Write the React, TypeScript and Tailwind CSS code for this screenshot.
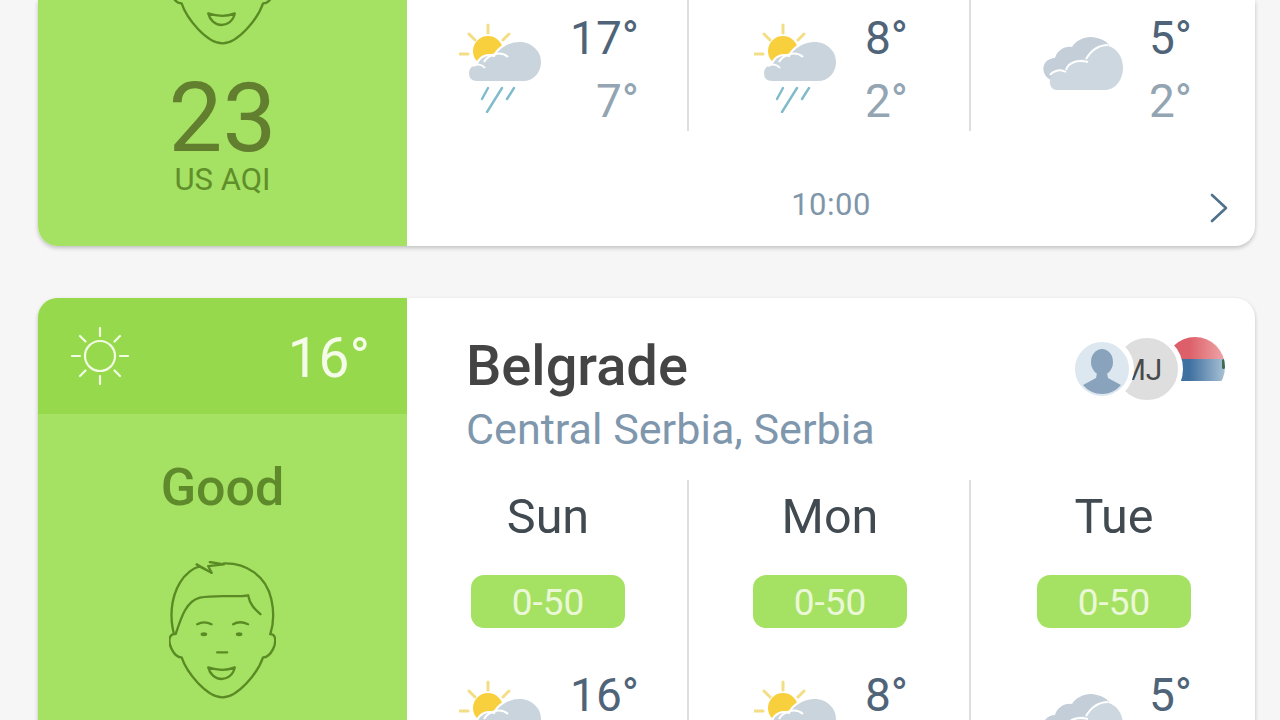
const days = [
  { name: 'Sun', high: '16°', top: '17°', low: '7°', icon: 'rain' },
  { name: 'Mon', high: '8°', top: '8°', low: '2°', icon: 'rain' },
  { name: 'Tue', high: '5°', top: '5°', low: '2°', icon: 'cloud' },
];

function RainIcon() {
  return (
    <svg width="84" height="90" viewBox="0 0 84 90" fill="none" className="ml-[4px] shrink-0">
      <g stroke="#f3dd85" strokeWidth="3" strokeLinecap="round">
        <path d="M29 2V10M1 31H9M10 11L16 17M50 11L44 17" />
      </g>
      <circle cx="29" cy="28" r="15" fill="#f8cf3d" />
      <path
        d="M18 59C11 59 9 54 9 50C9 45 13 41 18 41C20 34 28 30 35 33C39 24 51 17 63 18C74 19 83 28 83 39C83 50 75 59 64 59Z"
        fill="#c9d4dd"
        stroke="#ffffff"
        strokeWidth="2"
      />
      <path d="M25 39C29 32 41 27 49 34M14 43C18 41 23 41 26 45" stroke="#ffffff" strokeWidth="2" fill="none" />
      <g stroke="#7fbccb" strokeWidth="2.4" strokeLinecap="round">
        <path d="M29 65L23 76M43 65L28 89M55 65L48 76" />
      </g>
    </svg>
  );
}

function CloudIcon() {
  return (
    <svg width="80" height="53" viewBox="0 0 80 53" fill="none" className="mb-[10px] ml-[9px] -mr-[1px] shrink-0">
      <path
        d="M8 43C2 40 -1 34 1 28C3 23 8 21 12 21C14 14 21 9 29 10C34 2 45 -2 54 1C59 2 63 4 66 8L30 40Z"
        fill="#c3ced8"
      />
      <path
        d="M14 53C9 53 6 48 7 43C8 37 14 33 22 34C24 27 34 22 45 21C50 12 58 8 65 9C74 11 80 20 80 31C80 43 72 53 62 53Z"
        fill="#ccd7e0"
      />
      <path d="M7 38C11 33 18 32 23 35M23 33C25 26 34 22 45 25M43 22C49 12 57 8 65 8" stroke="#ffffff" strokeWidth="2" fill="none" />
    </svg>
  );
}

function Face() {
  return (
    <svg width="107" height="139" viewBox="417 815 322 418" fill="none" stroke="#5a8a24" strokeWidth="7" strokeLinecap="round" strokeLinejoin="round" className="shrink-0">
      <path d="M432 1035C420 990 420 930 450 880C465 855 490 835 510 832L545 850L500 825" />
      <path d="M545 850L535 830L582 825L540 818M582 822C650 820 710 860 725 930C735 975 730 1010 722 1035" />
      <path d="M437 1035C455 980 470 935 510 925C560 915 620 925 655 918C660 945 675 960 692 975" />
      <path d="M430 1035C415 1040 415 1060 425 1080C435 1100 445 1105 455 1105C470 1150 530 1225 578 1225C625 1225 685 1150 700 1105C712 1105 720 1100 730 1080C740 1060 740 1035 722 1035" />
      <path d="M502 1005C515 998 530 998 545 1005M610 1005C622 998 640 998 655 1005M562 1090H592" />
      <ellipse cx="522" cy="1035" rx="10" ry="6" fill="#5a8a24" stroke="none" />
      <ellipse cx="628" cy="1035" rx="10" ry="6" fill="#5a8a24" stroke="none" />
      <path d="M535 1135C565 1145 590 1145 615 1135C610 1160 590 1170 575 1170C555 1170 540 1155 535 1135Z" />
    </svg>
  );
}

function SunIcon() {
  return (
    <svg width="58" height="58" viewBox="0 0 58 58" fill="none" stroke="#f1fae2" strokeWidth="2.2" strokeLinecap="round" className="shrink-0">
      <circle cx="29" cy="29" r="15" />
      <path d="M29 1V9M29 49V57M1 29H9M49 29H57M9 9L14.5 14.5M49 9L43.5 14.5M9 49L14.5 43.5M49 49L43.5 43.5" />
    </svg>
  );
}

function TempRow({ icon, high, low }: { icon: string; high: string; low: string }) {
  return (
    <div className="flex h-[126px] items-center justify-center gap-[27px]">
      {icon === 'rain' ? <RainIcon /> : <CloudIcon />}
      <div className="flex flex-col items-end pt-[3px] text-[46px] leading-[63px]">
        <span className="h-[63px] text-[#4f6478]">{high}</span>
        <span className="h-[63px] text-[#93a4b2]">{low}</span>
      </div>
    </div>
  );
}

function Avatars() {
  return (
    <div className="flex items-start">
      <div className="relative z-20 flex h-[64px] w-[64px] shrink-0 items-center justify-center overflow-hidden rounded-full border-[5px] border-white bg-[#dde7ef]">
        <svg width="54" height="54" viewBox="0 0 54 54" fill="#8aa3bd">
          <ellipse cx="27" cy="20" rx="11" ry="13" />
          <path d="M22 31H32L33 36L46 43C41 49 34 52 27 52C20 52 13 49 8 43L21 36Z" />
        </svg>
      </div>
      <div className="relative z-10 -mt-[4px] -ml-[23px] flex h-[72px] w-[72px] shrink-0 items-center justify-center rounded-full border-[5px] border-white bg-[#dedede] pr-[12px] text-[30px] text-[#4a4a4a]">
        MJ
      </div>
      <div className="relative -ml-[18px] flex h-[60px] w-[60px] shrink-0 flex-col overflow-hidden rounded-full">
        <div className="h-[22px] bg-gradient-to-r from-[#dc5f6a] from-40% to-[#eda6a9]" />
        <div className="h-[22px] bg-gradient-to-r from-[#3e70a0] from-40% to-[#a9c2d4]" />
        <div className="h-[16px] bg-white" />
        <div className="absolute top-[22px] right-0 h-[10px] w-[3px] rounded-full bg-[#3f6b52]" />
      </div>
    </div>
  );
}

export default function App() {
  return (
    <div className="h-[720px] overflow-hidden bg-[#f6f6f7] px-[38px] font-['Roboto',sans-serif]">
      {/* top card, scrolled off */}
      <div className="flex h-[246px] w-[1217px] overflow-hidden rounded-b-[20px] bg-white shadow-[0_2px_4px_rgba(0,0,0,0.22)]">
        <div className="flex w-[369px] shrink-0 flex-col items-center bg-[#a5e162]">
          <div className="-mt-[93px]">
            <Face />
          </div>
          <div className="mt-[24px] text-[96px] leading-[96px] text-[#627f30]">23</div>
          <div className="-mt-[1px] text-[31px] leading-[30px] text-[#5f8e2b]">US AQI</div>
        </div>
        <div className="flex-1">
          <div className="grid h-[130px] grid-cols-[282px_282px_1fr]">
            {days.map((d, i) => (
              <div key={d.name} className={i < 2 ? 'border-r-2 border-[#dedede] pt-[5px]' : 'pt-[5px]'}>
                <TempRow icon={d.icon} high={d.top} low={d.low} />
              </div>
            ))}
          </div>
          <div className="grid grid-cols-[282px_282px_1fr] pt-[57px]">
            <div />
            <div className="pl-[2px] text-center text-[31px] leading-[36px] tracking-[0.5px] text-[#7f96aa]">10:00</div>
            <div className="flex justify-end pt-[6px] pr-[27px]">
              <svg width="18" height="30" viewBox="0 0 18 30" fill="none" stroke="#4f7189" strokeWidth="2.6" strokeLinecap="round" strokeLinejoin="round">
                <path d="M2 2L16 15L2 28" />
              </svg>
            </div>
          </div>
        </div>
      </div>

      <div className="mt-[52px] flex h-[604px] w-[1217px] overflow-hidden rounded-[20px] bg-white shadow-[0_2px_4px_rgba(0,0,0,0.22)]">
        <div className="flex w-[369px] shrink-0 flex-col items-center bg-[#a5e162]">
          <div className="flex h-[116px] w-full items-center justify-between bg-[#97d94c] pr-[37px] pl-[33px]">
            <SunIcon />
            <span className="pt-[5px] text-[55px] text-[#f4fbe8]">16°</span>
          </div>
          <div className="mt-[46px] text-[52px] leading-[56px] font-medium text-[#5f8a2c]">Good</div>
          <div className="mt-[45px]">
            <Face />
          </div>
        </div>
        <div className="flex-1">
          <div className="flex h-[182px] items-start justify-between pt-[39px] pr-[30px] pl-[58px]">
            <div>
              <div className="-mt-[1px] pl-[1px] text-[56px] leading-[60px] font-medium text-[#444444]">Belgrade</div>
              <div className="mt-[6px] pl-[1px] text-[43.1px] leading-[56px] text-[#7f97ad]">Central Serbia, Serbia</div>
            </div>
            <Avatars />
          </div>
          <div className="grid grid-cols-[282px_282px_1fr]">
            {days.map((d, i) => (
              <div key={d.name} className={i < 2 ? 'border-r-2 border-[#dedede]' : ''}>
                <div className="pl-[2px]">
                  <div className="h-[72px] pt-[1px] text-center text-[48.5px] leading-[72px] text-[#404a50]">{d.name}</div>
                  <div className="mx-auto mt-[23px] flex h-[53px] w-[154px] items-center justify-center rounded-[13px] bg-[#a5e162] pt-[3px] text-[37px] text-[#eaf8d8]">
                    0-50
                  </div>
                </div>
                <div className="mt-[34px]">
                  <TempRow icon={d.icon} high={d.high} low="" />
                </div>
              </div>
            ))}
          </div>
        </div>
      </div>
    </div>
  );
}
